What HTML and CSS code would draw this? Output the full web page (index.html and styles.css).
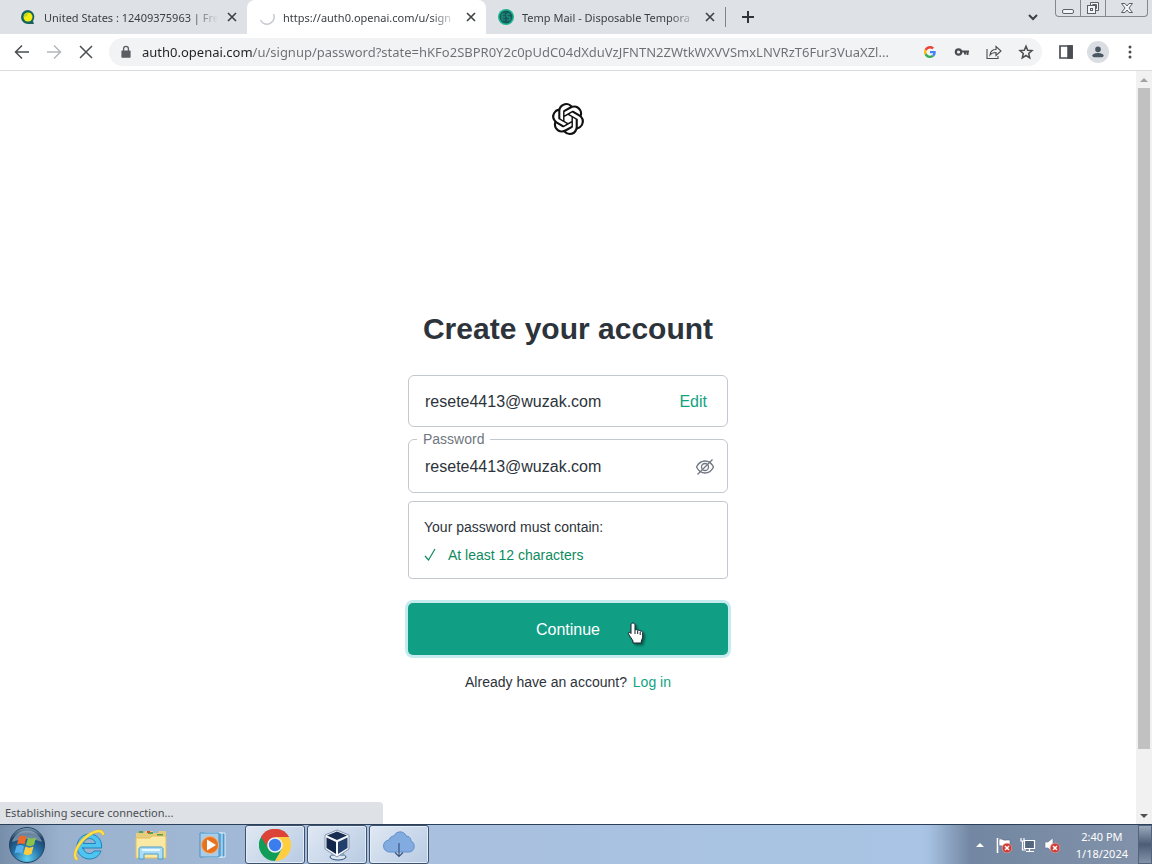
FILE: index.html
```html
<!DOCTYPE html>
<html lang="en">
  <head>
    <meta charset="UTF-8" />
    <meta name="viewport" content="width=device-width, initial-scale=1.0" />
    <title>Create your account</title>
    <link rel="stylesheet" href="styles.css">
  </head>
  <body>
    <div class="tab-strip">
      <div class="tab">
        <svg class="favicon" viewBox="0 0 16 16">
          <path d="M8 1a7 7 0 1 0 0 14h6l-1-3a7 7 0 0 0-5-11z" fill="#17645f" />
          <circle cx="8" cy="8" r="4.500" fill="#f4ee12" />
          <path d="M4 8a4 4 0 0 1 4-4l-1 3z" fill="#b6d524" />
        </svg>
        <span class="tab-title">United States : 12409375963 | Fre</span>
        <button class="tab-close" aria-label="Close tab">
          <svg viewBox="0 0 10 10"><path d="M1 1l8 8M9 1l-8 8" /></svg>
        </button>
      </div>
      <div class="tab active">
        <svg class="favicon" viewBox="0 0 16 16">
          <path d="M14.500 5A7 7 0 0 1 1.500 11" fill="none" stroke="#c8ccd2" stroke-width="1.600" />
        </svg>
        <span class="tab-title">https://auth0.openai.com/u/sign</span>
        <button class="tab-close" aria-label="Close tab">
          <svg viewBox="0 0 10 10"><path d="M1 1l8 8M9 1l-8 8" /></svg>
        </button>
      </div>
      <div class="tab">
        <svg class="favicon" viewBox="0 0 16 16">
          <circle cx="8" cy="8" r="8" fill="#20b593" />
          <circle cx="8" cy="8" r="6.500" fill="#175c5c" />
          <path d="M7 5H4v6h3M4 8h3M12 5H9v3h3v3H9" fill="none" stroke="#1e9e85" />
        </svg>
        <span class="tab-title">Temp Mail - Disposable Tempora</span>
        <button class="tab-close" aria-label="Close tab">
          <svg viewBox="0 0 10 10"><path d="M1 1l8 8M9 1l-8 8" /></svg>
        </button>
      </div>
      <div class="tab-divider"></div>
      <button class="new-tab" aria-label="New tab">
        <svg viewBox="0 0 12 12"><path d="M6 0v12M0 6h12" /></svg>
      </button>
      <button class="tab-search" aria-label="Search tabs">
        <svg viewBox="0 0 12 8"><path d="M2 2l4 4 4-4" /></svg>
      </button>
      <div class="window-buttons">
        <button aria-label="Minimize">
          <svg viewBox="0 0 14 14"><rect x="1.500" y="8.500" width="11" height="4" rx="1.500" /></svg>
        </button>
        <button aria-label="Restore">
          <svg viewBox="0 0 14 14">
            <path d="M4.500 4V1.500h8v8H10" />
            <path d="M6.500 4V3.500h4v4H10" />
            <rect x="1.500" y="4.500" width="8" height="8" />
            <rect x="4.500" y="7.500" width="2" height="2" />
          </svg>
        </button>
        <button class="wide" aria-label="Close window">
          <svg viewBox="0 0 14 14"><path d="M1.500 2.500h3.500l2 2.500 2-2.500h3.500L9 7l3.500 4.500H9L7 9l-2 2.500H1.500L5 7z" /></svg>
        </button>
      </div>
    </div>

    <div class="toolbar">
      <button class="tool" aria-label="Back">
        <svg viewBox="0 0 16 16"><path d="M15 8H2M8 1.500L1.500 8 8 14.500" /></svg>
      </button>
      <button class="tool disabled" aria-label="Forward">
        <svg viewBox="0 0 16 16"><path d="M1 8h13M8 1.500L14.500 8 8 14.500" /></svg>
      </button>
      <button class="tool" aria-label="Stop">
        <svg viewBox="0 0 16 16"><path d="M2 2l12 12M14 2L2 14" /></svg>
      </button>
      <div class="omnibox">
        <svg class="lock" viewBox="0 0 16 16">
          <path d="M4 6.500h8a.6.6 0 0 1 .6.6v6a.6.6 0 0 1-.6.6H4a.6.6 0 0 1-.6-.6v-6a.6.6 0 0 1 .6-.6z" fill="#5a5d61" />
          <path d="M5.600 7V4.700a2.400 2.400 0 0 1 4.800 0V7" fill="none" stroke="#5a5d61" stroke-width="1.300" />
        </svg>
        <input class="url" type="text" aria-label="Address" spellcheck="false" value="auth0.openai.com/u/signup/password?state=hKFo2SBPR0Y2c0pUdC04dXduVzJFNTN2ZWtkWXVVSmxLNVRzT6Fur3VuaXZl..." />
        <button class="tool" aria-label="Google">
          <svg class="small" viewBox="0 0 48 48">
            <g stroke="none">
              <path fill="#ea4335" d="M24 9.500c3.500 0 6.700 1.200 9.200 3.600l6.900-6.900C35.900 2.400 30.500 0 24 0 14.600 0 6.500 5.400 2.600 13.200l8 6.200C12.400 13.700 17.700 9.500 24 9.500z" />
              <path fill="#4285f4" d="M47 24.500c0-1.600-.2-3.100-.4-4.500H24v9h12.900c-.6 3-2.200 5.500-4.700 7.200l7.700 6C44.400 38 47 31.800 47 24.500z" />
              <path fill="#fbbc05" d="M10.500 28.600A14.500 14.500 0 0 1 10.500 19.400l-8-6.200a24 24 0 0 0 0 21.600z" />
              <path fill="#34a853" d="M24 48c6.500 0 11.900-2.100 15.900-5.800l-7.700-6c-2.200 1.500-4.900 2.300-8.200 2.300-6.300 0-11.600-4.200-13.500-9.900l-8 6.200C6.500 42.600 14.600 48 24 48z" />
            </g>
          </svg>
        </button>
        <button class="tool" aria-label="Passwords">
          <svg viewBox="0 0 16 16">
            <circle cx="4.500" cy="8" r="2.700" stroke-width="2.200" />
            <path d="M7 7.500h8M11 7.500v3M13.500 7.500v3.500" stroke-width="2" />
          </svg>
        </button>
        <button class="tool" aria-label="Share">
          <svg viewBox="0 0 16 16">
            <path d="M1 5v9.500h11V12M4 11c.5-4 3-5.500 6-5.500V2.500L15 7l-5 4.500V8.500c-2.500 0-4.500.5-6 2.500z" stroke-width="1.100" />
          </svg>
        </button>
        <button class="tool" aria-label="Bookmark this tab">
          <svg viewBox="0 0 16 16">
            <path d="M8 2.200l1.700 4 4.300.4-3.300 2.900 1 4.300L8 11.500l-3.700 2.300 1-4.300L2 6.600l4.300-.4z" />
          </svg>
        </button>
      </div>
      <button class="tool" aria-label="Side panel">
        <svg viewBox="0 0 16 16">
          <path d="M2 2h12v12H2z" stroke-width="1.700" /><path d="M10 2h4v12h-4z" fill="#4a4d51" />
        </svg>
      </button>
      <button class="tool avatar" aria-label="Profile">
        <svg viewBox="0 0 16 16">
          <g fill="#4a5863" stroke="none">
            <circle cx="8" cy="5" r="3.200" /><path d="M1.500 14v-2c0-2 4-3 6.500-3s6.500 1 6.500 3v2z" />
          </g>
        </svg>
      </button>
      <button class="tool" aria-label="Menu">
        <svg viewBox="0 0 16 16">
          <g fill="#4a4d51" stroke="none">
            <circle cx="8" cy="3" r="1.500" /><circle cx="8" cy="8" r="1.500" /><circle cx="8" cy="13" r="1.500" />
          </g>
        </svg>
      </button>
    </div>

    <div class="viewport">
      <div class="page">
        <header>
          <svg class="logo" viewBox="0 0 24 24" role="img" aria-label="OpenAI">
            <path d="M22.2819 9.8211a5.9847 5.9847 0 0 0-.5157-4.9108 6.0462 6.0462 0 0 0-6.5098-2.9A6.0651 6.0651 0 0 0 4.9807 4.1818a5.9847 5.9847 0 0 0-3.9977 2.9 6.0462 6.0462 0 0 0 .7427 7.0966 5.98 5.98 0 0 0 .511 4.9107 6.051 6.051 0 0 0 6.5146 2.9001A5.9847 5.9847 0 0 0 13.2599 24a6.0557 6.0557 0 0 0 5.7718-4.2058 5.9894 5.9894 0 0 0 3.9977-2.9001 6.0557 6.0557 0 0 0-.7475-7.0729zm-9.022 12.6081a4.4755 4.4755 0 0 1-2.8764-1.0408l.1419-.0804 4.7783-2.7582a.7948.7948 0 0 0 .3927-.6813v-6.7369l2.02 1.1686a.071.071 0 0 1 .038.052v5.5826a4.504 4.504 0 0 1-4.4945 4.4944zm-9.6607-4.1254a4.4708 4.4708 0 0 1-.5346-3.0137l.142.0852 4.783 2.7582a.7712.7712 0 0 0 .7806 0l5.8428-3.3685v2.3324a.0804.0804 0 0 1-.0332.0615L9.74 19.9502a4.4992 4.4992 0 0 1-6.1408-1.6464zM2.3408 7.8956a4.485 4.485 0 0 1 2.3655-1.9728V11.6a.7664.7664 0 0 0 .3879.6765l5.8144 3.3543-2.0201 1.1685a.0757.0757 0 0 1-.071 0l-4.8303-2.7865A4.504 4.504 0 0 1 2.3408 7.872zm16.5963 3.8558L13.1038 8.364 15.1192 7.2a.0757.0757 0 0 1 .071 0l4.8303 2.7913a4.4944 4.4944 0 0 1-.6765 8.1042v-5.6772a.79.79 0 0 0-.407-.667zm2.0107-3.0231l-.142-.0852-4.7735-2.7818a.7759.7759 0 0 0-.7854 0L9.409 9.2297V6.8974a.0662.0662 0 0 1 .0284-.0615l4.8303-2.7866a4.4992 4.4992 0 0 1 6.6802 4.66zM8.3065 12.863l-2.02-1.1638a.0804.0804 0 0 1-.038-.0567V6.0742a4.4992 4.4992 0 0 1 7.3757-3.4537l-.142.0805L8.704 5.459a.7948.7948 0 0 0-.3927.6813zm1.0976-2.3654l2.602-1.4998 2.6069 1.4998v2.9994l-2.5974 1.4997-2.6067-1.4997Z" />
          </svg>
        </header>
        <main>
          <h1>Create your account</h1>
          <form class="signup">
            <div class="field email">
              <input type="text" aria-label="Email address" value="resete4413@wuzak.com" readonly />
              <a href="#">Edit</a>
            </div>
            <div class="field password">
              <label for="password">Password</label>
              <input type="text" id="password" value="resete4413@wuzak.com" spellcheck="false" />
              <button type="button" class="eye" aria-label="Hide password">
                <svg viewBox="0 0 20 20">
                  <path d="M1.500 10C3.500 6 6.500 4 10 4s6.500 2 8.500 6c-2 4-5 6-8.500 6s-6.500-2-8.500-6z" />
                  <circle cx="10" cy="10" r="3.500" />
                  <path d="M2.500 17.500l15-15" />
                </svg>
              </button>
            </div>
            <div class="rules">
              <p>Your password must contain:</p>
              <ul>
                <li>
                  <svg viewBox="0 0 12 14"><path d="M1 8l3.500 4L11 1" /></svg>
                  At least 12 characters
                </li>
              </ul>
            </div>
            <button type="submit" class="continue">
              Continue
              <svg class="cursor" viewBox="0 0 18 25">
                <path d="M6 2c1.200 0 2 .8 2 2v5c.4-.6 2.300-.5 2.700.5.700-.6 2.300-.2 2.500.7.900-.5 2.500 0 2.500 1.500v4.500c0 1.500-1.200 2.500-1.400 3.800v2H6v-2C5 18 3 15.500 1.500 13c-.8-1.500 1-2.500 2.500-.5V4c0-1.200.8-2 2-2z" fill="#fff" stroke="#18202c" />
                <path d="M8 9v4M10.700 10v3M13.200 11v3" fill="none" stroke="#18202c" />
              </svg>
            </button>
          </form>
          <p class="login">Already have an account? <a href="#">Log in</a></p>
        </main>
        <div class="status">Establishing secure connection...</div>
      </div>
      <div class="scrollbar">
        <svg viewBox="0 0 8 4"><path d="M0 4l4-4 4 4z" fill="#a3a3a3" /></svg>
        <div class="track"><div class="thumb"></div></div>
        <svg viewBox="0 0 8 4"><path d="M0 0l4 4 4-4z" fill="#505050" /></svg>
      </div>
    </div>

    <div class="taskbar">
      <button class="start" aria-label="Start">
        <svg viewBox="0 0 36 36">
          <defs>
            <radialGradient id="orb" cx=".5" cy=".9" r=".9">
              <stop offset="0" stop-color="#5fd0f2" />
              <stop offset=".45" stop-color="#2672a6" />
              <stop offset=".8" stop-color="#1d4168" />
              <stop offset="1" stop-color="#8fa9bf" />
            </radialGradient>
          </defs>
          <circle cx="18" cy="18" r="17.500" fill="url(#orb)" stroke="#24415f" />
          <path d="M3 15a15.500 15.500 0 0 1 30 0c-9-4-20-4-30 0z" fill="#fff" opacity=".35" />
          <path d="M10 10c3-2 5-1.500 7.500 0l-2 7.500c-2.500-1.500-5-1.500-7.500 0z" fill="#ee6a2c" />
          <path d="M19 10.500c2.500 1.500 5 1.500 8 0l-2 7.500c-3 1.500-5.500 1.500-8 0z" fill="#8bc34a" />
          <path d="M7.500 19c2.500-1.500 5-1.500 7.500 0l-2 7.500c-2.500-1.500-5-1.500-7.500 0z" fill="#57b0ea" />
          <path d="M16.500 19.500c2.500 1.500 5 1.500 8 0l-2 7.500c-3 1.500-5.500 1.500-8 0z" fill="#fccb3f" />
        </svg>
      </button>
      <button class="task" aria-label="Internet Explorer">
        <svg viewBox="0 0 32 32">
          <path d="M9 19h19.500c1-8-4.500-14-12-14C9.500 5 4 10.500 4 17.500S9.500 30 16.500 30c5.500 0 9.800-3 11.500-8h-7c-1 1.800-2.500 2.500-4.500 2.500-3.500 0-5.700-2-6-5.500zm1.500-4.500c.5-3 2.800-5 6-5s5.500 2 6 5z" fill="#4fc4ef" stroke="#1c83bf" />
          <path d="M3.500 30C-1 25 6 13 15 6.500 22 1.500 29 .5 30 5" fill="none" stroke="#d8ae2a" stroke-width="3" stroke-linecap="round" />
          <path d="M3.500 30C-1 25 6 13 15 6.500 22 1.500 29 .5 30 5" fill="none" stroke="#ffe04a" stroke-width="2.200" stroke-linecap="round" />
        </svg>
      </button>
      <button class="task" aria-label="Windows Explorer">
        <svg viewBox="0 0 32 32">
          <path d="M1 5V4h8l1-2h8v2h5l1-2h7v27H1z" fill="#e6cd7b" />
          <path d="M4 3h4M13 4h5M22 6h6" stroke="#5a9e49" stroke-width="2" />
          <path d="M12 3h3" stroke="#cf4d3e" stroke-width="2" />
          <path d="M1 9h14l2-2h14v22H1z" fill="#f9e9a4" stroke="#e0bf63" />
          <path d="M4 30V20c0-1 1-2 2-2h20c1 0 2 1 2 2v10h-5v-5H9v5z" fill="#a9dcf5" stroke="#4a9ccb" />
          <path d="M7 21h18" stroke="#e9f8ff" stroke-width="2" />
        </svg>
      </button>
      <button class="task" aria-label="Windows Media Player">
        <svg viewBox="0 0 32 32">
          <path d="M10 4h18v24H10z" fill="#4f98cc" stroke="#d9f0fc" />
          <path d="M7 4h18v24H7z" fill="#63a9d7" stroke="#d9f0fc" />
          <path d="M3 4h19v24H3z" fill="#a8cde8" stroke="#4e91c4" />
          <circle cx="13" cy="16" r="8.500" fill="#e8731e" stroke="#f7b27d" />
          <path d="M10 10.500l9 5.500-9 5.500z" fill="#fff" />
        </svg>
      </button>
      <button class="task open" aria-label="Google Chrome">
        <svg viewBox="0 0 32 32">
          <path d="M16 16L2.100 8A16 16 0 0 1 29.900 8z" fill="#db4437" />
          <path d="M16 16L2.100 8A16 16 0 0 0 16 32l7-12z" fill="#0f9d58" />
          <path d="M16 8h13.900A16 16 0 0 1 16 32l7-12z" fill="#ffcd40" />
          <path d="M2.100 8A16 16 0 0 1 29.900 8H16a8 8 0 0 0-7 12z" fill="#db4437" />
          <path d="M2.100 8L9 20l4 4-8 4z" fill="#0f9d58" />
          <circle cx="16" cy="16" r="7.800" fill="#f1f1f1" />
          <circle cx="16" cy="16" r="6.200" fill="#3b7ded" />
        </svg>
      </button>
      <button class="task open" aria-label="VirtualBox">
        <svg viewBox="0 0 32 32">
          <ellipse cx="17" cy="28" rx="8" ry="3" fill="#dce5ef" stroke="#31537f" />
          <path d="M12 22h10l2 5H10z" fill="#8ba1bc" />
          <path d="M16 1l12 5v14l-12 8L4 20V6z" fill="#f4f8fd" stroke="#8496ae" />
          <path d="M16 2.500L26 6.500 16 11 6 6.500z" fill="#172d52" />
          <path d="M5.500 8.500L15 13v12l-9.500-6z" fill="#11264a" />
          <path d="M26.500 8.500L17 13v12l9.500-6z" fill="#233f6b" />
        </svg>
      </button>
      <button class="task open" aria-label="Cloud download">
        <svg viewBox="0 0 32 32">
          <path d="M7 23a6 6 0 0 1-1-12C7 8 9 7 11 7c2-5 10-6 12 0 3 0 5 2 5 5 5 2 4 11-2 11z" fill="#82abe0" stroke="#6390cb" />
          <path d="M16 14v13M12 23.500l4 4 4-4" fill="none" stroke="#3a5580" stroke-width="1.200" />
        </svg>
      </button>
      <div class="tray">
        <button aria-label="Show hidden icons">
          <svg class="arrow" viewBox="0 0 8 4"><path d="M0 4l4-4 4 4z" fill="#fff" /></svg>
        </button>
        <button aria-label="Action Center">
          <svg viewBox="0 0 16 16">
            <path d="M1.500 1v15" stroke="#fff" stroke-width="1.600" />
            <path d="M3 2c3-1 4 2 7 1h4v7H9c-2 0-3-2-6-1z" fill="#fff" stroke="#57677c" stroke-width=".6" />
            <circle cx="11" cy="11" r="4.800" fill="#cf3a34" stroke="#f0aaa4" stroke-width=".6" />
            <path d="M9 9l4 4M13 9l-4 4" stroke="#fff" stroke-width="1.500" />
          </svg>
        </button>
        <button aria-label="Network">
          <svg viewBox="0 0 16 16">
            <path d="M4.500 3.500h10v8h-10zM9.500 12v2M6 14.500h8" fill="#53667e" stroke="#fff" stroke-width="1.200" />
            <path d="M1 1v3h3V1M2.500 4v9H6" fill="none" stroke="#fff" stroke-width="1.200" />
          </svg>
        </button>
        <button aria-label="Volume muted">
          <svg viewBox="0 0 16 16">
            <path d="M1 5h3l5-4v14l-5-4H1z" fill="#fff" stroke="#65758c" stroke-width=".6" />
            <circle cx="11" cy="11" r="4.800" fill="#cf3a34" stroke="#f0aaa4" stroke-width=".6" />
            <path d="M9 9l4 4M13 9l-4 4" stroke="#fff" stroke-width="1.500" />
          </svg>
        </button>
        <div class="clock">
          <div>2:40 PM</div>
          <div>1/18/2024</div>
        </div>
        <button class="show-desktop" aria-label="Show desktop"></button>
      </div>
    </div>
  </body>
</html>
```
FILE: styles.css
```css
* {
  box-sizing: border-box;
}
body {
  margin: 0;
  height: 100vh;
  display: flex;
  flex-direction: column;
  overflow: hidden;
  font-family: "Noto Sans", "Open Sans", sans-serif;
  font-size: 11px;
  color: #3c4043;
  background-color: #fff;
}
button {
  padding: 0;
  border: none;
  background: none;
  font: inherit;
  color: inherit;
}
svg {
  display: block;
}
h1,
p,
ul {
  margin: 0;
  padding: 0;
}

/* Tabs */
.tab-strip {
  display: flex;
  align-items: center;
  height: 34px;
  padding-left: 8px;
  background-color: #dee1e6;
}
.tab {
  flex: 0 1 239px;
  min-width: 0;
  height: 34px;
  display: flex;
  align-items: center;
  gap: 8px;
  padding: 0 9px 0 12px;
}
.tab.active {
  background-color: #fff;
  border-radius: 8px 8px 0 0;
}
.favicon {
  flex: none;
  width: 16px;
  height: 16px;
}
.tab-title {
  flex: 1;
  min-width: 0;
  white-space: nowrap;
  -webkit-mask-image: linear-gradient(to right, #000 85%, transparent);
  mask-image: linear-gradient(to right, #000 85%, transparent);
}
.tab-close {
  flex: none;
  width: 12px;
  height: 16px;
  display: flex;
  align-items: center;
  justify-content: center;
}
.tab-close svg {
  width: 10px;
  height: 10px;
  stroke: #3c4043;
  stroke-width: 1.6;
}
.tab-divider {
  width: 1px;
  height: 20px;
  background-color: #808388;
}
.new-tab svg {
  width: 12px;
  height: 12px;
  margin-left: 16px;
  stroke: #303337;
  stroke-width: 2;
}
.tab-search {
  margin-left: auto;
  margin-right: 16px;
}
.tab-search svg {
  width: 12px;
  height: 8px;
  fill: none;
  stroke: #3c4043;
  stroke-width: 2;
}
.window-buttons {
  align-self: flex-start;
  display: flex;
  margin-right: 4px;
  border: 1px solid #85898f;
  border-top: none;
  border-radius: 0 0 4px 4px;
}
.window-buttons button {
  width: 25px;
  height: 16px;
  display: flex;
  align-items: center;
  justify-content: center;
  border-right: 1px solid #85898f;
}
.window-buttons button.wide {
  width: 41px;
  border-right: none;
}
.window-buttons svg {
  width: 14px;
  height: 14px;
  fill: #f4f5f7;
  stroke: #5c6168;
}

/* Toolbar */
.toolbar {
  display: flex;
  align-items: center;
  height: 37px;
  padding: 0 6px;
  border-bottom: 1px solid #d9dbdd;
  background-color: #fff;
}
.tool {
  flex: none;
  width: 32px;
  height: 28px;
  display: flex;
  align-items: center;
  justify-content: center;
}
.tool svg {
  width: 16px;
  height: 16px;
  fill: none;
  stroke: #4a4d51;
  stroke-width: 1.5;
}
.tool svg.small {
  width: 12px;
  height: 12px;
}
.tool.disabled svg {
  stroke: #b5b7ba;
}
.omnibox {
  flex: 1;
  min-width: 0;
  display: flex;
  align-items: center;
  height: 28px;
  margin: 0 8px 0 7px;
  padding-left: 9px;
  border-radius: 14px;
  background-color: #f1f3f4;
}
.lock {
  flex: none;
  width: 16px;
  height: 16px;
}
/* host is dark, the rest of the address is grey */
.url {
  flex: 1;
  min-width: 0;
  margin: 0 4px 0 8px;
  padding: 0;
  border: none;
  outline: none;
  font-family: inherit;
  font-size: 13px;
  color: transparent;
  background-image: linear-gradient(to right, #202124 111px, #6b6f74 111px);
  -webkit-background-clip: text;
  background-clip: text;
}
.avatar svg {
  width: 22px;
  height: 22px;
  padding: 4px;
  border-radius: 50%;
  background-color: #dadde2;
}

/* Page */
.viewport {
  flex: 1;
  min-height: 0;
  display: flex;
}
.page {
  flex: 1;
  position: relative;
  overflow: hidden;
  font-family: "Liberation Sans", Arial, sans-serif;
  font-size: 14px;
  color: #2d333a;
}
header {
  display: flex;
  justify-content: center;
  padding-top: 32px;
}
.logo {
  width: 32px;
  height: 32px;
  fill: #111;
}
main {
  max-width: 320px;
  margin: 170px auto 0;
}
h1 {
  font-size: 30px;
  line-height: 48px;
  text-align: center;
  white-space: nowrap;
}
a {
  color: #10a37f;
  text-decoration: none;
}
.signup {
  margin-top: 22px;
}
.field {
  position: relative;
  display: flex;
  align-items: center;
  height: 52px;
  padding: 2px 12px 0 16px;
  border: 1px solid #c2c8d0;
  border-radius: 6px;
}
.field input {
  flex: 1;
  min-width: 0;
  padding: 0;
  border: none;
  outline: none;
  font-family: inherit;
  font-size: 16px;
  color: #2d333a;
  background: none;
}
.email a {
  font-size: 16px;
  padding-right: 8px;
}
.password {
  height: 54px;
  margin-top: 12px;
}
/* label sits on the top border */
.password label {
  position: absolute;
  top: -9px;
  left: 8px;
  padding: 0 6px;
  line-height: 16px;
  color: #6f7780;
  background-color: #fff;
}
.eye svg {
  width: 20px;
  height: 20px;
  fill: none;
  stroke: #6f7780;
  stroke-width: 1.3;
}
.rules {
  margin-top: 8px;
  padding: 15px 15px 13px;
  border: 1px solid #c2c8d0;
  border-radius: 4px;
}
.rules p {
  line-height: 20px;
}
.rules ul {
  margin-top: 8px;
  list-style: none;
}
.rules li {
  display: flex;
  align-items: center;
  gap: 12px;
  line-height: 20px;
  color: #0e8a60;
}
.rules svg {
  width: 12px;
  height: 14px;
  fill: none;
  stroke: #0e8a60;
  stroke-width: 1.2;
}
.continue {
  position: relative;
  width: 100%;
  height: 52px;
  margin-top: 24px;
  padding-top: 2px;
  border-radius: 5px;
  font-size: 16px;
  color: #fff;
  background-color: #109e84;
  box-shadow: 0 0 0 3px #c5ebee;
}
.cursor {
  position: absolute;
  left: 219px;
  top: 18px;
  width: 18px;
  height: 25px;
  filter: drop-shadow(2px 2px 1px rgba(0, 0, 0, 0.4));
}
.login {
  margin-top: 16px;
  line-height: 22px;
  text-align: center;
}
.login a {
  margin-left: 2px;
}
.status {
  position: absolute;
  left: 0;
  bottom: 0;
  width: 383px;
  height: 22px;
  padding-left: 5px;
  border-radius: 0 4px 0 0;
  font-family: "Noto Sans", "Open Sans", sans-serif;
  font-size: 11px;
  line-height: 22px;
  color: #4b4e52;
  background-color: #dee1e6;
}

.scrollbar {
  width: 16px;
  display: flex;
  flex-direction: column;
  align-items: center;
  background-color: #f1f1f1;
}
.scrollbar svg {
  width: 8px;
  height: 4px;
  margin: 7px 0 6px;
}
.track {
  flex: 1;
  width: 12px;
}
.thumb {
  height: 92%;
  background-color: #c1c1c1;
}

/* Taskbar */
.taskbar {
  display: flex;
  align-items: center;
  gap: 2px;
  height: 40px;
  border-top: 1px solid #2c405a;
  background-image: linear-gradient(to right, #778eab, #9ab1ce 60px, #a9c0de 400px, #a9c4e4 80%, #a4bfdf 930px, #7387a2 970px, #8292aa);
}
.start {
  width: 54px;
  margin-right: 3px;
  display: flex;
  justify-content: center;
}
.start svg {
  width: 36px;
  height: 36px;
}
.task {
  width: 60px;
  height: 39px;
  display: flex;
  align-items: center;
  justify-content: center;
  border: 1px solid transparent;
}
.task.open {
  border-color: #3f526d;
  border-radius: 3px;
  box-shadow: inset 0 0 0 1px #e3edf8;
  background-image: linear-gradient(135deg, #e0e8f3, #b8cbe3);
}
.task svg {
  width: 32px;
  height: 32px;
}
.tray {
  align-self: stretch;
  display: flex;
  align-items: center;
  gap: 8px;
  margin-left: auto;
  color: #fff;
}
.tray svg {
  width: 16px;
  height: 16px;
}
.tray svg.arrow {
  width: 8px;
  height: 4px;
  margin-right: 4px;
}
.clock {
  margin: 0 2px 0 8px;
  line-height: 17px;
  text-align: center;
}
.show-desktop {
  align-self: stretch;
  width: 14px;
  border: 1px solid #53637a;
  background-image: linear-gradient(#99a8ba, #4c5d76 50%, #8393a9);
}
```
